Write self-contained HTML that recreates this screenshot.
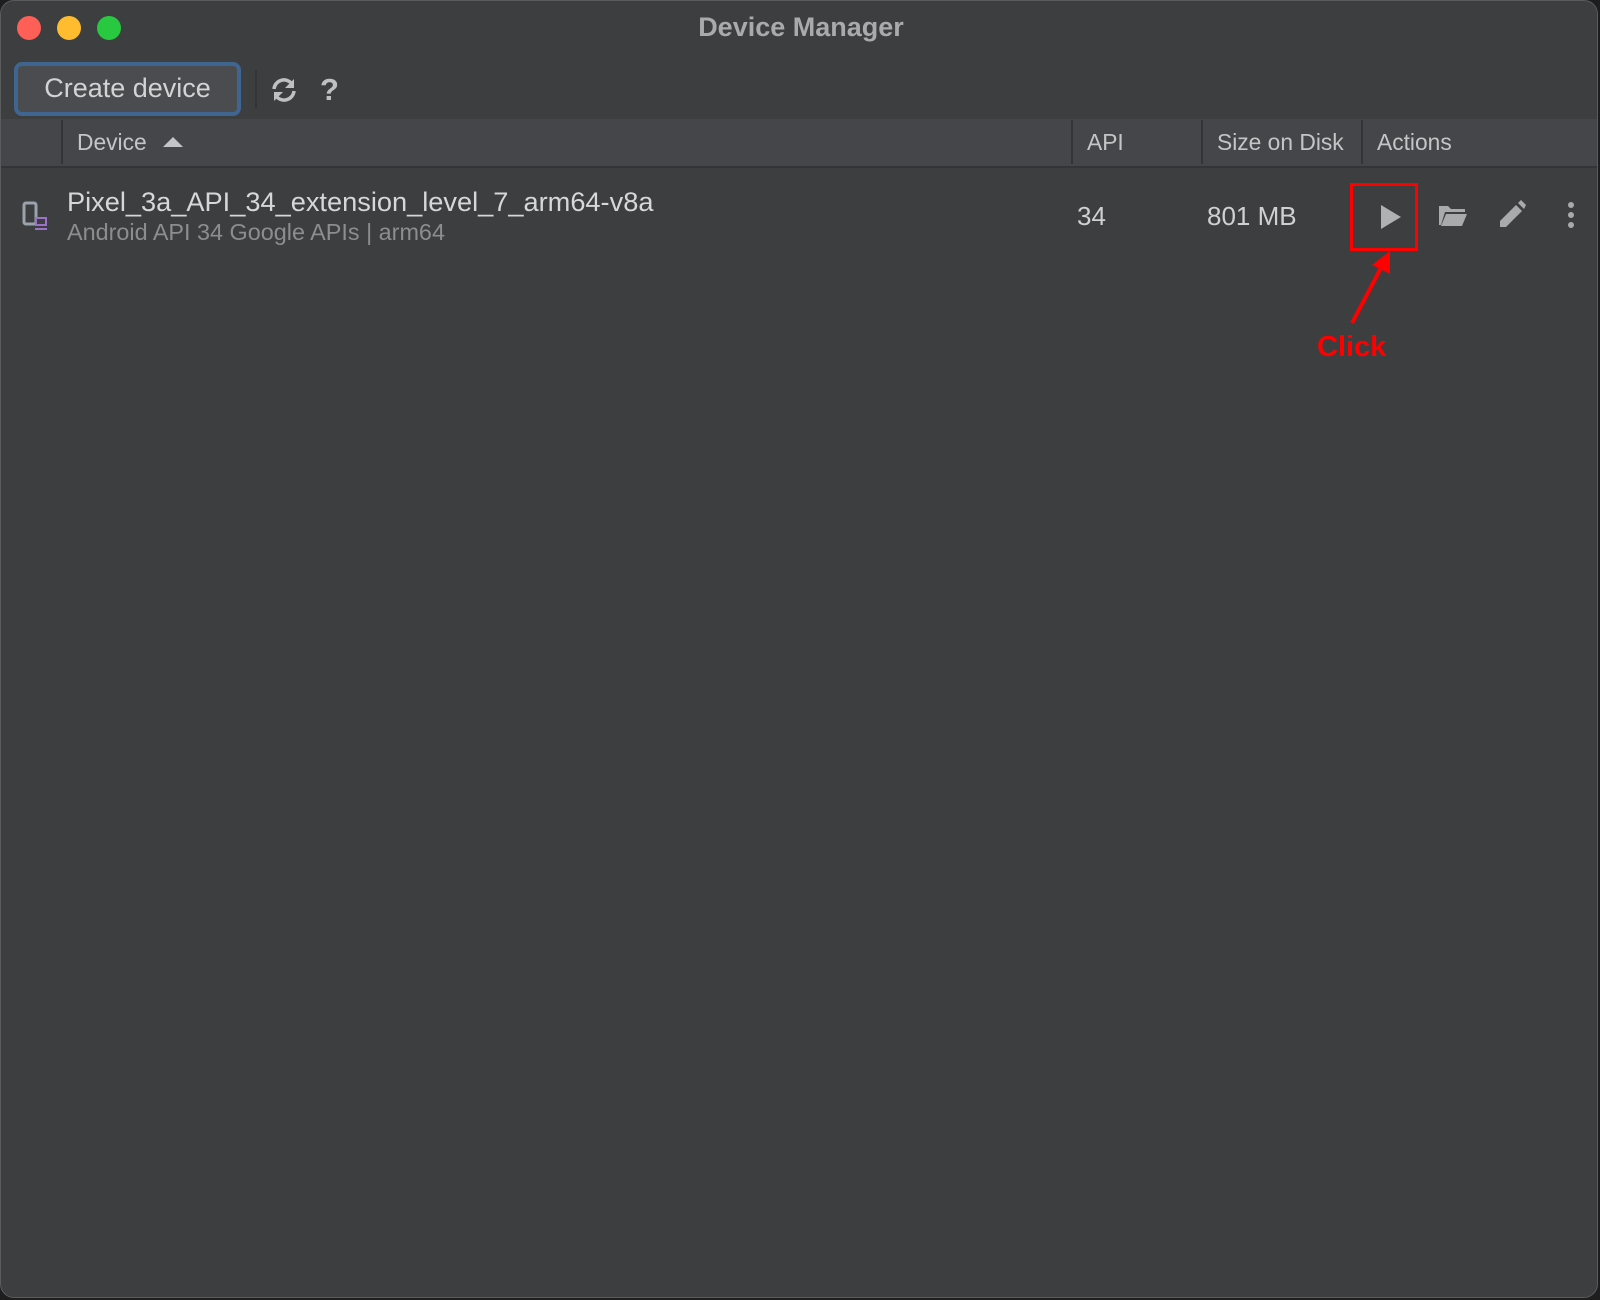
<!DOCTYPE html>
<html><head><meta charset="utf-8"><style>
html,body{margin:0;padding:0;background:#1e1e1e;}
body{width:1600px;height:1300px;position:relative;overflow:hidden;font-family:"Liberation Sans",sans-serif;}
.win{position:absolute;left:0;top:0;width:1598px;height:1298px;background:#3d3e40;border-radius:14px;border:1px solid #5a5b5d;box-sizing:border-box;overflow:hidden;}
.abs{position:absolute;}
.dot{position:absolute;top:15px;width:24px;height:24px;border-radius:50%;}
.title{position:absolute;top:11px;left:0;width:1600px;text-align:center;font-size:27px;font-weight:bold;color:#a9aaab;}
.hdr{position:absolute;left:0;top:118px;width:1600px;height:47px;background:#454649;border-bottom:2px solid #333436;}
.sep{position:absolute;top:1px;width:2px;height:44px;background:#333436;}
.ht{position:absolute;top:10px;font-size:22.8px;color:#c4c5c6;}
.txt{position:absolute;color:#cfd0d1;}
</style></head><body>
<div class="win">
 <div class="dot" style="left:16px;background:#fe5f57"></div>
 <div class="dot" style="left:56px;background:#febc2e"></div>
 <div class="dot" style="left:96px;background:#28c840"></div>
 <div class="title">Device Manager</div>
 <div class="abs" style="left:13px;top:61px;width:227px;height:54px;border:4px solid #3f6591;border-radius:8px;box-sizing:border-box;background:#4a4c4f;"></div>
 <div class="txt" style="left:13px;top:72px;width:227px;text-align:center;font-size:27px;color:#d2d3d4;">Create device</div>
 <div class="abs" style="left:254px;top:69px;width:2px;height:39px;background:#333436"></div>
 <svg class="abs" style="left:268px;top:75px" width="30" height="28" viewBox="0 0 30 28">
  <path d="M5 13 A10 10 0 0 1 23 8" fill="none" stroke="#bfc0c1" stroke-width="3.5"/>
  <path d="M25 3 L25 12 L16 12 Z" fill="#bfc0c1"/>
  <path d="M25 15 A10 10 0 0 1 7 20" fill="none" stroke="#bfc0c1" stroke-width="3.5"/>
  <path d="M5 25 L5 16 L14 16 Z" fill="#bfc0c1"/>
 </svg>
 <div class="txt" style="left:319px;top:71px;font-size:31px;font-weight:bold;color:#bfc0c1;">?</div>
 <div class="hdr">
  <div class="sep" style="left:60px"></div>
  <div class="ht" style="left:76px">Device</div>
  <svg class="abs" style="left:162px;top:17px" width="20" height="12"><path d="M0 11 L10 1 L20 11Z" fill="#c4c5c6"/></svg>
  <div class="sep" style="left:1070px"></div>
  <div class="ht" style="left:1086px">API</div>
  <div class="sep" style="left:1200px"></div>
  <div class="ht" style="left:1216px">Size on Disk</div>
  <div class="sep" style="left:1360px"></div>
  <div class="ht" style="left:1376px">Actions</div>
 </div>
 <svg class="abs" style="left:20px;top:200px" width="28" height="32">
  <rect x="3" y="2" width="12" height="21" rx="2" fill="none" stroke="#9aa3ab" stroke-width="3"/>
  <rect x="15" y="17" width="10" height="7" fill="#3d3e40" stroke="#9a72c8" stroke-width="2"/>
  <rect x="14" y="27" width="12" height="2" fill="#9a72c8"/>
 </svg>
 <div class="txt" style="left:66px;top:185px;font-size:27.2px;color:#d6d7d8;">Pixel_3a_API_34_extension_level_7_arm64-v8a</div>
 <div class="txt" style="left:66px;top:218px;font-size:23.4px;color:#8c8d8f;">Android API 34 Google APIs | arm64</div>
 <div class="txt" style="left:1076px;top:200px;font-size:26px;">34</div>
 <div class="txt" style="left:1206px;top:200px;font-size:26px;">801 MB</div>
 <div class="abs" style="left:1349px;top:182px;width:68px;height:68px;border:3px solid #ff0000;box-sizing:border-box;"></div>
 <svg class="abs" style="left:1379px;top:203px" width="22" height="26"><path d="M1 1 L21 13 L1 25Z" fill="#b0b1b2"/></svg>
 <svg class="abs" style="left:1437px;top:202px" width="30" height="24">
  <path d="M1 3 L10 3 L13 6 L27 6 L27 9 L7 9 L3 22 L1 22Z" fill="#a9aaab"/>
  <path d="M8 11 L29 11 L24 23 L3 23Z" fill="#a9aaab"/>
 </svg>
 <svg class="abs" style="left:1497px;top:199px" width="28" height="28">
  <path d="M2 27 L2 21 L18 5 L24 11 L8 27Z" fill="#a9aaab"/>
  <path d="M20 3 L23 0 L28 5 L26 9Z" fill="#a9aaab"/>
 </svg>
 <svg class="abs" style="left:1564px;top:200px" width="12" height="28">
  <circle cx="6" cy="4" r="3" fill="#a9aaab"/><circle cx="6" cy="14" r="3" fill="#a9aaab"/><circle cx="6" cy="24" r="3" fill="#a9aaab"/>
 </svg>
 <svg class="abs" style="left:1340px;top:245px" width="60" height="80">
  <path d="M11 77 L42 18" stroke="#ff0000" stroke-width="4" fill="none"/>
  <path d="M49 5 L49 28 L31 19Z" fill="#ff0000"/>
 </svg>
 <div class="abs" style="left:1316px;top:330px;font-size:29px;font-weight:bold;color:#ff0000;">Click</div>
</div>
</body></html>
